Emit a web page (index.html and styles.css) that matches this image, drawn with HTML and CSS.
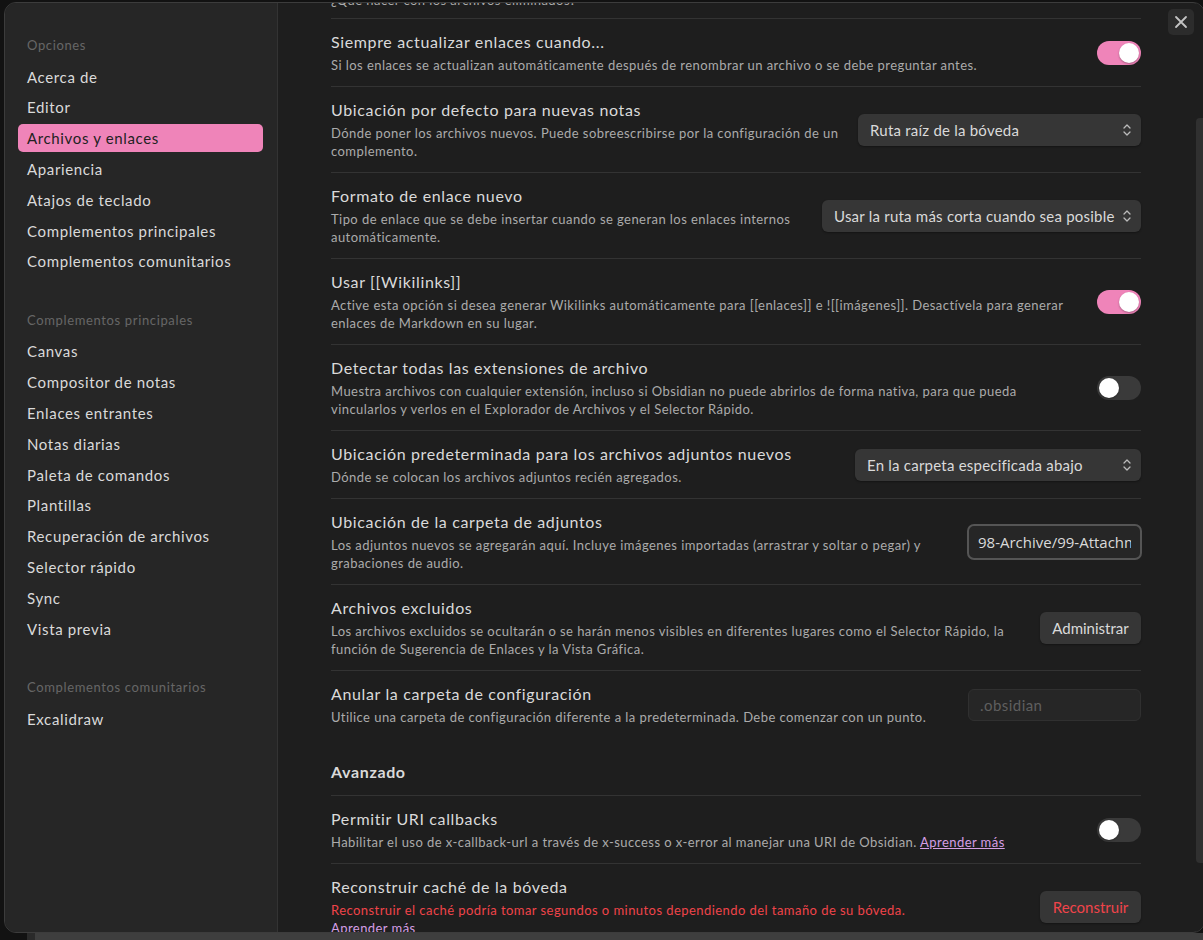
FILE: index.html
```html
<!DOCTYPE html>
<html lang="es">
<head>
<meta charset="utf-8">
<title>Opciones</title>
<link rel="stylesheet" href="styles.css">
</head>
<body>
<div class="stage">
  <div class="modal">
    <button class="close" aria-label="Cerrar">
      <svg width="14" height="14" viewBox="0 0 14 14"><path d="M2 2 L12 12 M12 2 L2 12" stroke="currentColor" stroke-width="1.8" stroke-linecap="round" fill="none"/></svg>
    </button>
    <nav class="sidebar">
      <div class="nav-group">
        <div class="nav-header">Opciones</div>
        <div class="nav-item">Acerca de</div>
        <div class="nav-item">Editor</div>
        <div class="nav-item active">Archivos y enlaces</div>
        <div class="nav-item">Apariencia</div>
        <div class="nav-item">Atajos de teclado</div>
        <div class="nav-item">Complementos principales</div>
        <div class="nav-item">Complementos comunitarios</div>
      </div>
      <div class="nav-group">
        <div class="nav-header">Complementos principales</div>
        <div class="nav-item">Canvas</div>
        <div class="nav-item">Compositor de notas</div>
        <div class="nav-item">Enlaces entrantes</div>
        <div class="nav-item">Notas diarias</div>
        <div class="nav-item">Paleta de comandos</div>
        <div class="nav-item">Plantillas</div>
        <div class="nav-item">Recuperación de archivos</div>
        <div class="nav-item">Selector rápido</div>
        <div class="nav-item">Sync</div>
        <div class="nav-item">Vista previa</div>
      </div>
      <div class="nav-group">
        <div class="nav-header">Complementos comunitarios</div>
        <div class="nav-item">Excalidraw</div>
      </div>
    </nav>
    <main class="content">
      <div class="scroll">
        <div class="setting first">
          <div class="info">
            <div class="name">Archivos eliminados</div>
            <div class="desc">¿Qué hacer con los archivos eliminados?</div>
          </div>
        </div>

        <div class="setting">
          <div class="info">
            <div class="name">Siempre actualizar enlaces cuando...</div>
            <div class="desc">Si los enlaces se actualizan automáticamente después de renombrar un archivo o se debe preguntar antes.</div>
          </div>
          <div class="control"><div class="toggle on"><span class="knob"></span></div></div>
        </div>

        <div class="setting">
          <div class="info">
            <div class="name">Ubicación por defecto para nuevas notas</div>
            <div class="desc">Dónde poner los archivos nuevos. Puede sobreescribirse por la configuración de un complemento.</div>
          </div>
          <div class="control">
            <div class="dropdown w-283"><span>Ruta raíz de la bóveda</span><svg class="chev" width="10" height="14" viewBox="0 0 10 14"><path d="M2 5 L5 2 L8 5 M2 9 L5 12 L8 9" stroke="currentColor" stroke-width="1.3" fill="none" stroke-linecap="round" stroke-linejoin="round"/></svg></div>
          </div>
        </div>

        <div class="setting">
          <div class="info">
            <div class="name">Formato de enlace nuevo</div>
            <div class="desc">Tipo de enlace que se debe insertar cuando se generan los enlaces internos automáticamente.</div>
          </div>
          <div class="control">
            <div class="dropdown w-319"><span>Usar la ruta más corta cuando sea posible</span><svg class="chev" width="10" height="14" viewBox="0 0 10 14"><path d="M2 5 L5 2 L8 5 M2 9 L5 12 L8 9" stroke="currentColor" stroke-width="1.3" fill="none" stroke-linecap="round" stroke-linejoin="round"/></svg></div>
          </div>
        </div>

        <div class="setting">
          <div class="info">
            <div class="name">Usar [[Wikilinks]]</div>
            <div class="desc">Active esta opción si desea generar Wikilinks automáticamente para [[enlaces]] e ![[imágenes]]. Desactívela para generar enlaces de Markdown en su lugar.</div>
          </div>
          <div class="control"><div class="toggle on"><span class="knob"></span></div></div>
        </div>

        <div class="setting">
          <div class="info">
            <div class="name">Detectar todas las extensiones de archivo</div>
            <div class="desc">Muestra archivos con cualquier extensión, incluso si Obsidian no puede abrirlos de forma nativa, para que pueda vincularlos y verlos en el Explorador de Archivos y el Selector Rápido.</div>
          </div>
          <div class="control"><div class="toggle"><span class="knob"></span></div></div>
        </div>

        <div class="setting">
          <div class="info">
            <div class="name">Ubicación predeterminada para los archivos adjuntos nuevos</div>
            <div class="desc">Dónde se colocan los archivos adjuntos recién agregados.</div>
          </div>
          <div class="control">
            <div class="dropdown w-286"><span>En la carpeta especificada abajo</span><svg class="chev" width="10" height="14" viewBox="0 0 10 14"><path d="M2 5 L5 2 L8 5 M2 9 L5 12 L8 9" stroke="currentColor" stroke-width="1.3" fill="none" stroke-linecap="round" stroke-linejoin="round"/></svg></div>
          </div>
        </div>

        <div class="setting">
          <div class="info">
            <div class="name">Ubicación de la carpeta de adjuntos</div>
            <div class="desc">Los adjuntos nuevos se agregarán aquí. Incluye imágenes importadas (arrastrar y soltar o pegar) y grabaciones de audio.</div>
          </div>
          <div class="control"><input class="text-input focused" type="text" value="98-Archive/99-Attachments"></div>
        </div>

        <div class="setting">
          <div class="info">
            <div class="name">Archivos excluidos</div>
            <div class="desc">Los archivos excluidos se ocultarán o se harán menos visibles en diferentes lugares como el Selector Rápido, la función de Sugerencia de Enlaces y la Vista Gráfica.</div>
          </div>
          <div class="control"><button class="btn">Administrar</button></div>
        </div>

        <div class="setting">
          <div class="info">
            <div class="name">Anular la carpeta de configuración</div>
            <div class="desc">Utilice una carpeta de configuración diferente a la predeterminada. Debe comenzar con un punto.</div>
          </div>
          <div class="control"><input class="text-input plain" type="text" placeholder=".obsidian"></div>
        </div>

        <div class="setting-heading">Avanzado</div>

        <div class="setting">
          <div class="info">
            <div class="name">Permitir URI callbacks</div>
            <div class="desc">Habilitar el uso de x-callback-url a través de x-success o x-error al manejar una URI de Obsidian. <a class="link" href="#">Aprender más</a></div>
          </div>
          <div class="control"><div class="toggle"><span class="knob"></span></div></div>
        </div>

        <div class="setting">
          <div class="info">
            <div class="name">Reconstruir caché de la bóveda</div>
            <div class="desc"><div class="error">Reconstruir el caché podría tomar segundos o minutos dependiendo del tamaño de su bóveda.</div><a class="link plainlink" href="#">Aprender más</a></div>
          </div>
          <div class="control"><button class="btn danger">Reconstruir</button></div>
        </div>
      </div>
    </main>
    <div class="scrollbar"><div class="thumb"></div></div>
  </div>
</div>
<div class="backdrop-strip"><span class="s1"></span><span class="s2"></span><span class="s3"></span></div>
</body>
</html>
```

FILE: styles.css
```css
* { box-sizing: border-box; }
html, body {
  margin: 0;
  width: 1203px;
  height: 940px;
  overflow: hidden;
  background: #121212;
  font-family: "Lato", "Noto Sans", sans-serif;
  letter-spacing: 0.04em;
  color: #dadada;
}
.stage {
  padding: 2px 0 0 4px;
  height: 933px;
}
.modal {
  position: relative;
  display: flex;
  width: 1201px;
  height: 931px;
  border: 1px solid #3c3c3c;
  border-radius: 12px;
  overflow: hidden;
  background: #1e1e1e;
}
.close {
  position: absolute;
  top: 6px;
  right: 10px;
  width: 26px;
  height: 26px;
  border: none;
  border-radius: 5px;
  background: #2c2c2c;
  color: #c4c4c4;
  display: flex;
  align-items: center;
  justify-content: center;
  padding: 0;
}

/* sidebar */
.sidebar {
  width: 273px;
  flex: none;
  background: #262626;
  border-right: 1px solid #333;
  padding: 28px 14px 0 13px;
}
.nav-group + .nav-group { margin-top: 30.5px; }
.nav-header {
  height: 28px;
  line-height: 28px;
  padding-left: 9px;
  font-size: 13px;
  color: #666;
  margin-bottom: 3.6px;
}
.nav-item {
  height: 28px;
  line-height: 28px;
  padding-left: 9px;
  font-size: 15px;
  color: #dadada;
  border-radius: 5px;
  margin-bottom: 2.8px;
}
.nav-item.active {
  background: #ef84b9;
  color: #222;
}

/* content */
.content {
  flex: 1;
  overflow: hidden;
  padding: 0 55px 0 53px;
}
.scroll { margin-top: -49px; }
.setting {
  display: flex;
  align-items: center;
  padding: 12px 0;
  border-top: 1px solid #333;
}
.setting.first { border-top: none; padding-bottom: 9px; }
.info {
  flex: 1 1 auto;
  margin-right: 14px;
}
.name {
  font-size: 16px;
  line-height: 21px;
  color: #dadada;
}
.desc {
  padding-top: 4px;
  font-size: 13px;
  line-height: 18px;
  letter-spacing: 0.44px;
  color: #ababab;
}
.control {
  flex: none;
  display: flex;
  justify-content: flex-end;
}
.setting-heading {
  padding: 23px 0 12px;
  font-size: 16px;
  line-height: 22px;
  font-weight: 700;
  color: #dadada;
}
.link {
  color: #d59fe4;
  text-decoration: underline;
}
.error { color: #f0444a; }

/* toggle */
.toggle {
  width: 44px;
  height: 24px;
  border-radius: 12px;
  background: #3a3a3a;
  padding: 2px;
  display: flex;
  justify-content: flex-start;
}
.toggle.on {
  background: #ef84b9;
  justify-content: flex-end;
}
.knob {
  width: 20px;
  height: 20px;
  border-radius: 50%;
  background: #fff;
  box-shadow: 0 1px 2px rgba(0,0,0,.3);
}

/* dropdown */
.dropdown {
  height: 32px;
  border-radius: 6px;
  background: #363636;
  box-shadow: 0 1px 2px rgba(0,0,0,.35);
  display: flex;
  align-items: center;
  justify-content: space-between;
  padding: 0 9px 0 12px;
  font-size: 15px;
  letter-spacing: 0.015em;
  color: #dadada;
}
.dropdown .chev { color: #bbb; }
.w-283 { width: 283px; }
.w-319 { width: 319px; }
.w-286 { width: 286px; }

/* inputs */
.text-input {
  font-family: "Open Sans", "Noto Sans", sans-serif;
  font-size: 15px;
  letter-spacing: 0;
  color: #dadada;
  background: #262626;
  outline: none;
}
.text-input.focused {
  width: 175px;
  height: 36px;
  border: 2px solid #555;
  border-radius: 7px;
  padding: 0 9px;
  margin-right: -1px;
}
.text-input.plain {
  width: 173px;
  height: 32px;
  border: 1px solid #303030;
  border-radius: 6px;
  padding: 0 11px;
  font-family: "Lato", "Noto Sans", sans-serif;
  letter-spacing: 0.03em;
}
.text-input.plain::placeholder { color: #5f5f5f; }

/* buttons */
.btn {
  height: 32px;
  width: 101px;
  border: none;
  border-radius: 6px;
  background: #363636;
  box-shadow: 0 1px 2px rgba(0,0,0,.35);
  font-family: "Lato", "Noto Sans", sans-serif;
  font-size: 15px;
  letter-spacing: 0;
  color: #dadada;
  padding: 0;
}
.btn.danger { color: #f0444a; }

/* scrollbar */
.scrollbar {
  width: 8px;
  flex: none;
  padding-top: 115px;
  background: #1e1e1e;
}
.thumb {
  height: 745px;
  border-radius: 4px 0 0 4px;
  background: #303030;
}

/* strip behind modal */
.backdrop-strip {
  display: flex;
  height: 7px;
}
.backdrop-strip .s1 { width: 27px; background: #121212; }
.backdrop-strip .s2 { width: 8px; background: #2a2a2a; }
.backdrop-strip .s3 { flex: 1; background: #3e3e3e; }
```
